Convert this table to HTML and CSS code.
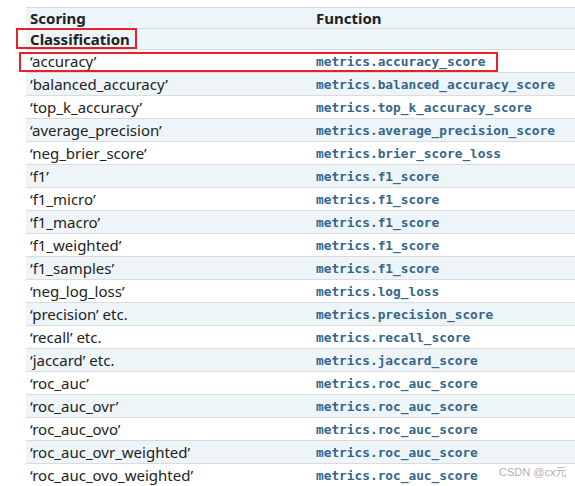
FILE: index.html
```html
<!DOCTYPE html>
<html>
<head>
<meta charset="utf-8">
<link rel="stylesheet" href="styles.css">
</head>
<body>
<div class="page">
  <div class="table">
    <div class="row head blue"><div class="c1">Scoring</div><div class="c2">Function</div></div>
    <div class="row head blue"><div class="c1">Classification</div><div class="c2"></div></div>
    <div class="row"><div class="c1">‘accuracy’</div><div class="c2"><code>metrics.accuracy_score</code></div></div>
    <div class="row blue"><div class="c1">‘balanced_accuracy’</div><div class="c2"><code>metrics.balanced_accuracy_score</code></div></div>
    <div class="row"><div class="c1">‘top_k_accuracy’</div><div class="c2"><code>metrics.top_k_accuracy_score</code></div></div>
    <div class="row blue"><div class="c1">‘average_precision’</div><div class="c2"><code>metrics.average_precision_score</code></div></div>
    <div class="row"><div class="c1">‘neg_brier_score’</div><div class="c2"><code>metrics.brier_score_loss</code></div></div>
    <div class="row blue"><div class="c1">‘f1’</div><div class="c2"><code>metrics.f1_score</code></div></div>
    <div class="row"><div class="c1">‘f1_micro’</div><div class="c2"><code>metrics.f1_score</code></div></div>
    <div class="row blue"><div class="c1">‘f1_macro’</div><div class="c2"><code>metrics.f1_score</code></div></div>
    <div class="row"><div class="c1">‘f1_weighted’</div><div class="c2"><code>metrics.f1_score</code></div></div>
    <div class="row blue"><div class="c1">‘f1_samples’</div><div class="c2"><code>metrics.f1_score</code></div></div>
    <div class="row"><div class="c1">‘neg_log_loss’</div><div class="c2"><code>metrics.log_loss</code></div></div>
    <div class="row blue"><div class="c1">‘precision’ etc.</div><div class="c2"><code>metrics.precision_score</code></div></div>
    <div class="row"><div class="c1">‘recall’ etc.</div><div class="c2"><code>metrics.recall_score</code></div></div>
    <div class="row blue"><div class="c1">‘jaccard’ etc.</div><div class="c2"><code>metrics.jaccard_score</code></div></div>
    <div class="row"><div class="c1">‘roc_auc’</div><div class="c2"><code>metrics.roc_auc_score</code></div></div>
    <div class="row blue"><div class="c1">‘roc_auc_ovr’</div><div class="c2"><code>metrics.roc_auc_score</code></div></div>
    <div class="row"><div class="c1">‘roc_auc_ovo’</div><div class="c2"><code>metrics.roc_auc_score</code></div></div>
    <div class="row blue"><div class="c1">‘roc_auc_ovr_weighted’</div><div class="c2"><code>metrics.roc_auc_score</code></div></div>
    <div class="row"><div class="c1">‘roc_auc_ovo_weighted’</div><div class="c2"><code>metrics.roc_auc_score</code></div></div>
  </div>
  <div class="mark mark-class"></div>
  <div class="mark mark-acc"></div>
  <div class="watermark">CSDN @cx元</div>
</div>
</body>
</html>
```
FILE: styles.css
```css
html, body {
  margin: 0;
  padding: 0;
  background: #fff;
  overflow: hidden;
}
.page {
  position: relative;
  width: 575px;
  height: 486px;
  overflow: hidden;
  padding: 7px 0 0 26px;
  box-sizing: border-box;
  font-family: "Noto Sans", "Open Sans", sans-serif;
  font-size: 15px;
  color: #222;
}
.table {
  width: 580px;
}
.row {
  display: grid;
  grid-template-columns: 286px 1fr;
  border-top: 1px solid #dcdcdc;
  height: 22px;
  align-items: center;
  white-space: nowrap;
}
.row.head {
  height: 20px;
  font-weight: bold;
}
.blue {
  background: #eef5f9;
}
.c1, .c2 {
  padding-left: 4px;
  line-height: 20px;
}
code {
  font-family: "DejaVu Sans Mono", monospace;
  font-size: 12.8px;
  font-weight: bold;
  color: #33668a;
}
.mark {
  position: absolute;
  border: 2px solid #e8202a;
  box-sizing: border-box;
}
.mark-class {
  left: 16px;
  top: 28px;
  width: 121px;
  height: 21px;
}
.mark-acc {
  left: 19px;
  top: 52px;
  width: 479px;
  height: 20px;
}
.watermark {
  position: absolute;
  left: 499px;
  top: 463px;
  font-family: "Liberation Sans", "Noto Sans CJK SC", sans-serif;
  font-size: 11px;
  color: #b0b0b0;
}
```
